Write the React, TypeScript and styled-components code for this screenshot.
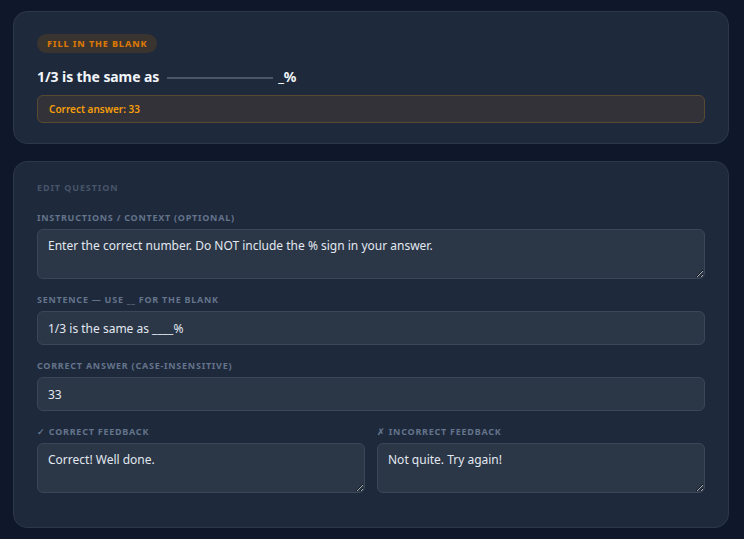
import React from "react";
import styled, { createGlobalStyle } from "styled-components";

const GlobalStyle = createGlobalStyle`
  html, body {
    margin: 0;
    padding: 0;
    background: #0f172a;
  }
  body {
    font-family: "Noto Sans", "Open Sans", sans-serif;
    color: #e2e8f0;
  }
  * { box-sizing: border-box; }
`;

//=============LAYOUT===========================
const Page = styled.div`
  display: flex;
  flex-direction: column;
  gap: 17px;
  padding: 11px 15px 12px 13px;
`;

const Card = styled.section<{ $pad?: string }>`
  background: #1e293b;
  border: 1px solid #2c3749;
  border-radius: 14px;
  padding: ${({ $pad }) => $pad || "22px 23px"};
  display: flex;
  flex-direction: column;
`;

//=============PREVIEW===========================
const Badge = styled.span`
  align-self: flex-start;
  height: 19px;
  line-height: 19px;
  padding: 0 10px;
  border-radius: 999px;
  background: #3a3430;
  color: #d97706;
  font-size: 9px;
  font-weight: 800;
  letter-spacing: 0.9px;
  text-transform: uppercase;
`;

const Sentence = styled.div`
  margin-top: 14px;
  display: flex;
  align-items: center;
  font-size: 14px;
  font-weight: 700;
  color: #f1f5f9;
  line-height: 20px;
  letter-spacing: -0.1px;
`;

const Blank = styled.span`
  display: inline-block;
  width: 106px;
  height: 2px;
  background: #4b5565;
  margin: 0 5px 0 8px;
  position: relative;
  top: 1px;
`;

const AnswerBox = styled.div`
  margin-top: 8px;
  height: 28px;
  display: flex;
  align-items: center;
  padding: 0 11px;
  background: #323238;
  border: 1px solid #5a4931;
  border-radius: 6px;
  color: #f59e0b;
  font-size: 10px;
  font-weight: 600;
`;

//=============EDITOR===========================
const SectionTitle = styled.div`
  font-size: 9px;
  font-weight: 700;
  letter-spacing: 0.9px;
  color: #475569;
  line-height: 12px;
  text-transform: uppercase;
`;

const Fields = styled.div`
  display: flex;
  flex-direction: column;
  gap: 15px;
  margin-top: 18px;
`;

const Row = styled.div`
  display: grid;
  grid-template-columns: 1fr 1fr;
  gap: 12px;
`;

const Field = styled.label`
  display: flex;
  flex-direction: column;
  gap: 5px;
`;

const Label = styled.span`
  font-size: 9px;
  font-weight: 700;
  letter-spacing: 0.75px;
  color: #64748b;
  line-height: 12px;
  text-transform: uppercase;
`;

const inputBase = `
  width: 100%;
  background: #2b3647;
  border: 1px solid #3b4659;
  border-radius: 6px;
  color: #e2e8f0;
  font-family: "Noto Sans", "Open Sans", sans-serif;
  font-size: 12px;
  outline: none;
  margin: 0;
`;

const TextArea = styled.textarea`
  ${inputBase}
  height: 50px;
  padding: 7px 10px;
  line-height: 18px;
  resize: vertical;
  display: block;
`;

const TextInput = styled.input`
  ${inputBase}
  height: 34px;
  padding: 0 10px;
`;

export default function App() {
  return (
    <>
      <GlobalStyle />
      <Page>
        <Card $pad="22px 23px 20px">
          <Badge>Fill in the blank</Badge>
          <Sentence>
            1/3 is the same as
            <Blank />
            _%
          </Sentence>
          <AnswerBox>Correct answer: 33</AnswerBox>
        </Card>

        <Card $pad="20px 23px 34px">
          <SectionTitle>Edit question</SectionTitle>
          <Fields>
            <Field>
              <Label>Instructions / context (optional)</Label>
              <TextArea
                readOnly
                defaultValue="Enter the correct number. Do NOT include the % sign in your answer."
              />
            </Field>
            <Field>
              <Label>Sentence — use __ for the blank</Label>
              <TextInput readOnly defaultValue="1/3 is the same as ____%" />
            </Field>
            <Field>
              <Label>Correct answer (case-insensitive)</Label>
              <TextInput readOnly defaultValue="33" />
            </Field>
            <Row>
              <Field>
                <Label>✓ Correct feedback</Label>
                <TextArea readOnly defaultValue="Correct! Well done." />
              </Field>
              <Field>
                <Label>✗ Incorrect feedback</Label>
                <TextArea readOnly defaultValue="Not quite. Try again!" />
              </Field>
            </Row>
          </Fields>
        </Card>
      </Page>
    </>
  );
}
